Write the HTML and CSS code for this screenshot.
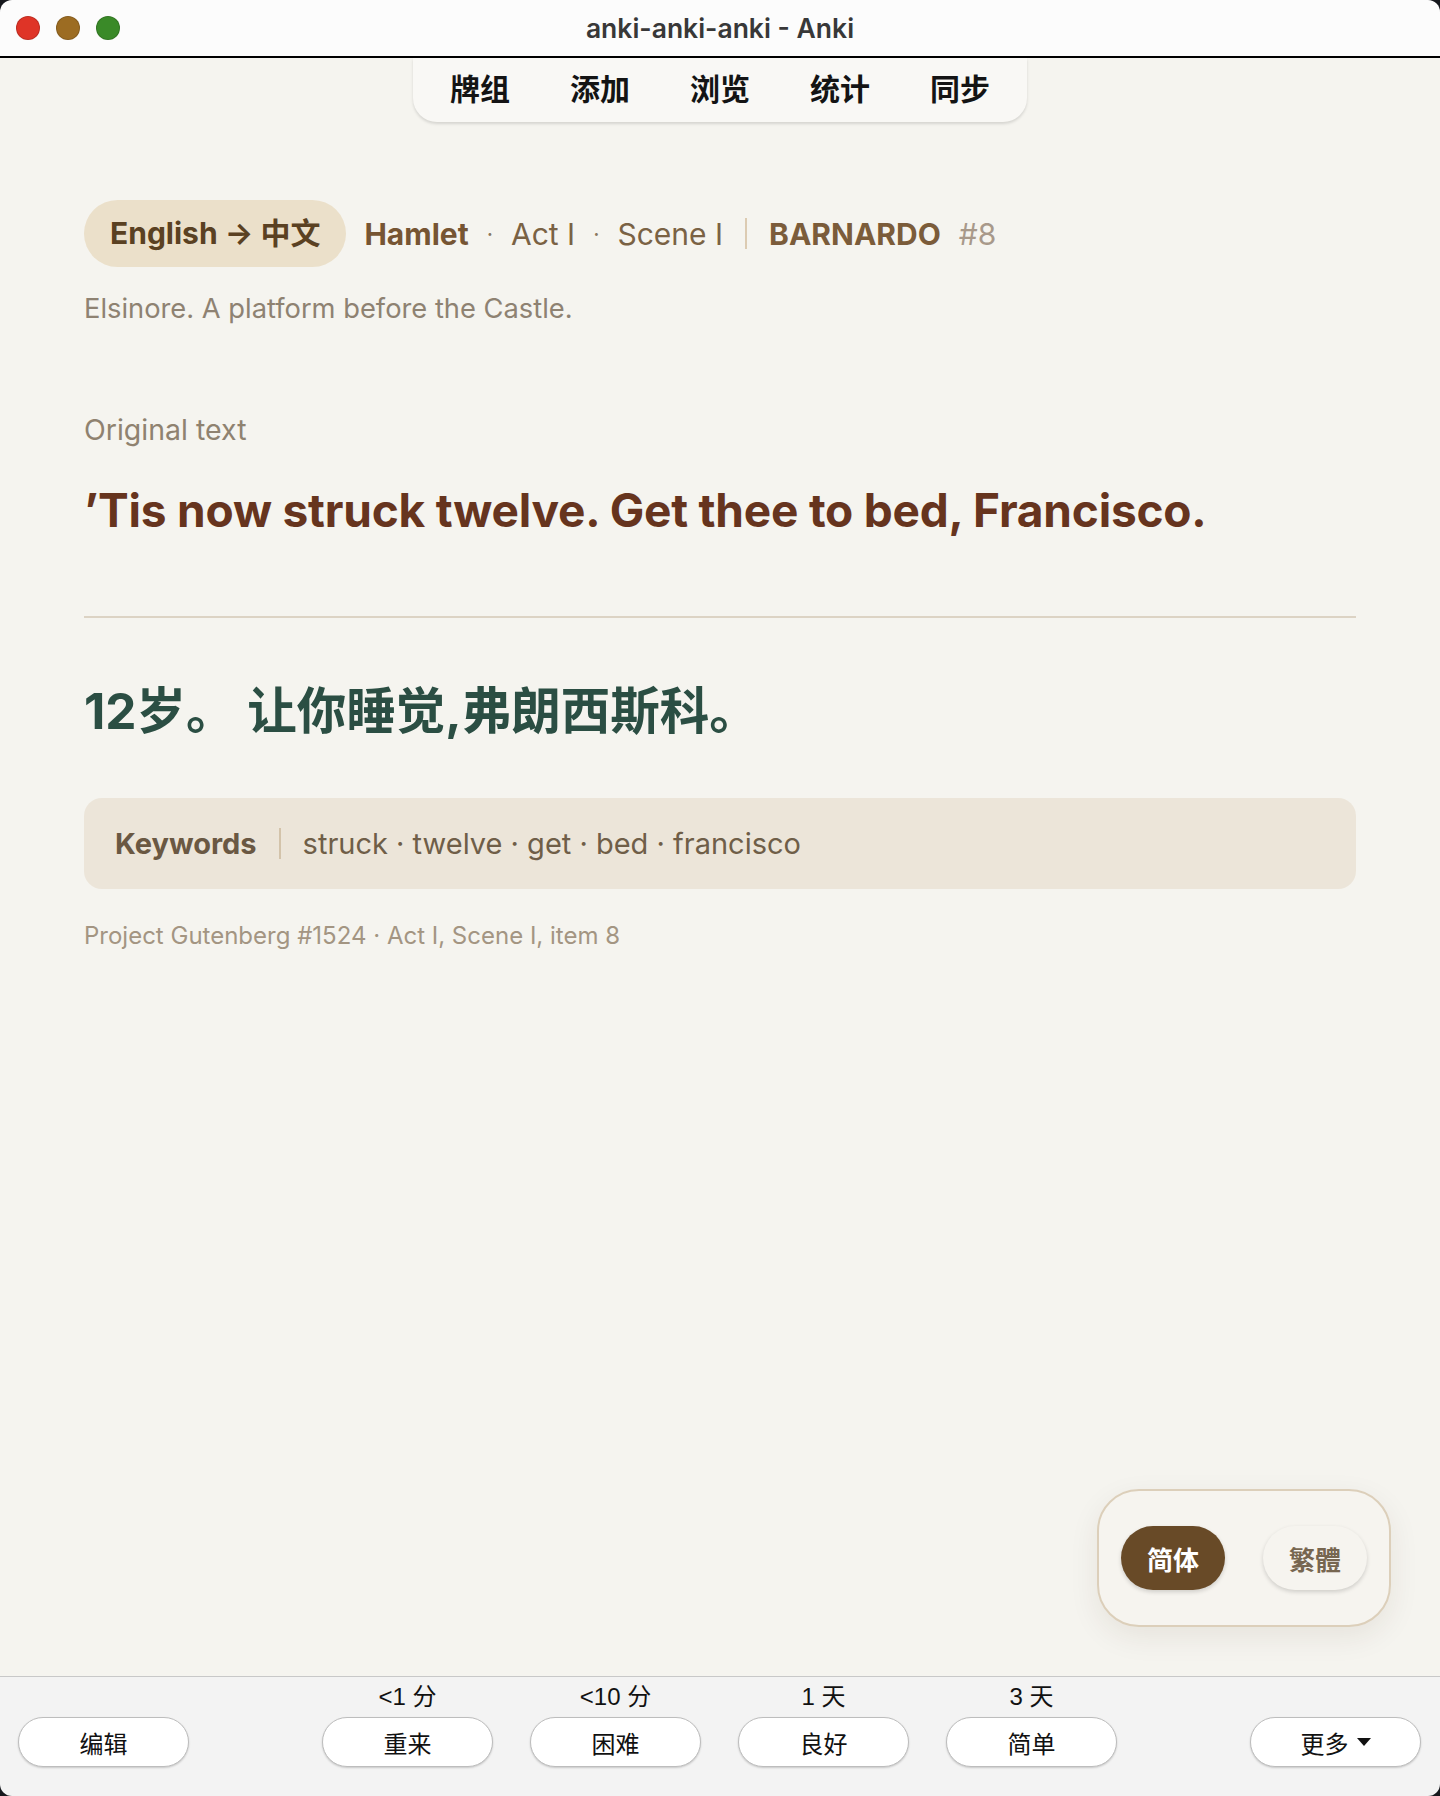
FILE: index.html
```
<!DOCTYPE html>
<html lang="zh-CN">
<head>
    <meta charset="UTF-8">
    <title>anki-anki-anki - Anki</title>
    <link rel="stylesheet" href="styles.css">
</head>
<body>

<div class="window">
    <header class="titlebar">
        <div class="lights">
            <span class="light red"></span>
            <span class="light yellow"></span>
            <span class="light green"></span>
        </div>
        <div class="title">anki-anki-anki - Anki</div>
        <div></div>
    </header>

    <main class="webview">
        <nav class="toolbar">
            <a href="#">牌组</a>
            <a href="#">添加</a>
            <a href="#">浏览</a>
            <a href="#">统计</a>
            <a href="#">同步</a>
        </nav>

        <article class="card">
            <div class="meta">
                <span class="lang-pill">English → 中文</span>
                <span class="play">Hamlet</span>
                <span class="dot">·</span>
                <span class="part">Act I</span>
                <span class="dot">·</span>
                <span class="part">Scene I</span>
                <span class="sep"></span>
                <span class="speaker">BARNARDO</span>
                <span class="line-no">#8</span>
            </div>
            <div class="setting">Elsinore. A platform before the Castle.</div>

            <div class="label">Original text</div>
            <div class="front">’Tis now struck twelve. Get thee to bed, Francisco.</div>

            <hr class="answer-rule">

            <div class="back">12岁。 让你睡觉,弗朗西斯科。</div>

            <div class="keywords">
                <span class="kw-title">Keywords</span>
                <span class="kw-sep"></span>
                <span class="kw-list">struck · twelve · get · bed · francisco</span>
            </div>

            <div class="source">Project Gutenberg #1524 · Act I, Scene I, item 8</div>
        </article>

        <div class="script-toggle">
            <button class="active">简体</button>
            <button>繁體</button>
        </div>
    </main>

    <footer class="answer-bar">
        <button class="btn">编辑</button>
        <div class="ease-group">
            <div class="ease">
                <span class="due">&lt;1 分</span>
                <button class="btn">重来</button>
            </div>
            <div class="ease">
                <span class="due">&lt;10 分</span>
                <button class="btn">困难</button>
            </div>
            <div class="ease">
                <span class="due">1 天</span>
                <button class="btn">良好</button>
            </div>
            <div class="ease">
                <span class="due">3 天</span>
                <button class="btn">简单</button>
            </div>
        </div>
        <button class="btn">更多<span class="caret"></span></button>
    </footer>
</div>

</body>
</html>
```

FILE: styles.css
```
html, body {
    margin: 0;
    height: 100%;
}

* {
    box-sizing: border-box;
}

body {
    background: #16181d;
    font-family: Inter, "Noto Sans CJK SC", sans-serif;
}

.window {
    height: 100vh;
    display: flex;
    flex-direction: column;
    border-radius: 12px;
    overflow: hidden;
}

/* title bar */
.titlebar {
    height: 58px;
    flex-shrink: 0;
    display: grid;
    grid-template-columns: 1fr auto 1fr;
    align-items: center;
    background: #fcfcfc;
    border-bottom: 2px solid #000;
}

.lights {
    display: flex;
    gap: 16px;
    padding-left: 16px;
}

.light {
    width: 24px;
    height: 24px;
    border-radius: 50%;
    border: 1px solid rgba(0, 0, 0, 0.15);
}

.red { background: #df3427; }
.yellow { background: #9c6c22; }
.green { background: #3a8a28; }

.title {
    font-size: 26.5px;
    font-weight: 600;
    color: #383838;
}

/* reviewer area */
.webview {
    flex: 1;
    position: relative;
    background: #f5f4ef;
    border-bottom: 1px solid #c8c8c8;
}

.toolbar {
    display: flex;
    width: fit-content;
    margin: 0 auto;
    height: 64px;
    align-items: center;
    padding: 0 7px 6px;
    background: #f9f8f5;
    border-radius: 0 0 24px 24px;
    box-shadow: 0 2px 3px rgba(0, 0, 0, 0.13);
}

.toolbar a {
    padding: 0 30px;
    font-family: "Noto Sans CJK SC", sans-serif;
    font-size: 30px;
    font-weight: 700;
    color: #141414;
    text-decoration: none;
}

.card {
    padding: 78px 84px 0;
}

.meta {
    display: flex;
    align-items: center;
    gap: 18px;
    font-size: 30px;
}

.lang-pill {
    height: 67px;
    display: flex;
    align-items: center;
    padding: 0 26px 5px;
    border-radius: 34px;
    background: #ebe0ca;
    color: #5a4122;
    font-weight: 700;
}

.play {
    font-weight: 700;
    color: #765533;
}

.speaker {
    font-weight: 700;
    color: #7b5c3a;
}

.part {
    color: #7a6244;
}

.dot {
    color: #8a7860;
    font-size: 22px;
}

.sep {
    width: 2px;
    height: 31px;
    margin: 0 4px;
    background: #dccbb2;
}

.line-no {
    color: #a8998a;
}

.setting {
    margin-top: 24px;
    font-size: 27.3px;
    line-height: 36px;
    color: #8e8272;
}

.label {
    margin-top: 84px;
    font-size: 28.5px;
    line-height: 38px;
    color: #8f8270;
}

.front {
    margin-top: 33px;
    font-size: 46px;
    line-height: 56px;
    font-weight: 700;
    letter-spacing: -0.2px;
    color: #66341e;
}

.answer-rule {
    margin: 78px 0 0;
    border: none;
    height: 2px;
    background: #dcd3c4;
}

.back {
    margin-top: 69px;
    font-size: 49.5px;
    line-height: 48px;
    font-weight: 700;
    color: #2b4e43;
}

.keywords {
    margin-top: 63px;
    height: 91px;
    display: flex;
    align-items: center;
    gap: 22px;
    padding: 0 31px;
    border-radius: 18px;
    background: #ece5d9;
    font-size: 29px;
}

.kw-title {
    font-weight: 700;
    color: #6a5843;
}

.kw-sep {
    width: 2px;
    height: 31px;
    background: #d3c3aa;
}

.kw-list {
    color: #6f5e48;
}

.source {
    margin-top: 31px;
    font-size: 24px;
    line-height: 32px;
    color: #a39582;
}

/* simplified / traditional switch */
.script-toggle {
    position: absolute;
    right: 49px;
    bottom: 49px;
    display: flex;
    gap: 38px;
    padding: 35px 22px;
    border: 2px solid #dccfba;
    border-radius: 42px;
    background: #f6f4ef;
    box-shadow: 0 10px 30px rgba(60, 40, 10, 0.08);
}

.script-toggle button {
    width: 104px;
    height: 64px;
    border: none;
    border-radius: 32px;
    font-family: "Noto Sans CJK SC", sans-serif;
    font-size: 26px;
    font-weight: 700;
    background: #f6f4ef;
    color: #776650;
    box-shadow: 0 2px 4px rgba(0, 0, 0, 0.16);
}

.script-toggle button.active {
    background: #684a27;
    color: #fff;
}

/* bottom answer buttons */
.answer-bar {
    height: 119px;
    flex-shrink: 0;
    display: flex;
    align-items: flex-end;
    justify-content: space-between;
    padding: 0 19px 29px 18px;
    background: #f3f3f3;
}

.ease-group {
    display: flex;
    gap: 37px;
}

.ease {
    display: flex;
    flex-direction: column;
    align-items: center;
    gap: 6px;
}

.due {
    font-family: "Liberation Sans", "Noto Sans CJK SC", sans-serif;
    font-size: 24px;
    line-height: 28px;
    color: #111;
}

.btn {
    width: 171px;
    height: 50px;
    border: 1px solid #bdbdbd;
    border-radius: 25px;
    background: #fff;
    box-shadow: 0 1px 2px rgba(0, 0, 0, 0.18);
    font-family: "Liberation Sans", "Noto Sans CJK SC", sans-serif;
    font-size: 24px;
    color: #111;
    display: flex;
    align-items: center;
    justify-content: center;
}

.caret {
    width: 0;
    height: 0;
    margin-left: 8px;
    border-left: 7px solid transparent;
    border-right: 7px solid transparent;
    border-top: 8px solid #111;
}
```
